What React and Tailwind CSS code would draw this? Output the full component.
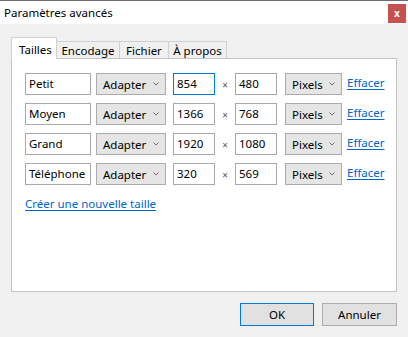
const ROWS = [
  { name: 'Petit', w: '854', h: '480', focused: true },
  { name: 'Moyen', w: '1366', h: '768' },
  { name: 'Grand', w: '1920', h: '1080' },
  { name: 'Téléphone', w: '320', h: '569' },
]

const TABS = [
  { label: 'Encodage', width: 'w-[63px]' },
  { label: 'Fichier', width: 'w-[49px]' },
  { label: 'À propos', width: 'w-[58px]' },
]

function Chevron() {
  return (
    <svg width="6" height="4" viewBox="0 0 6 4" className="shrink-0 -mt-[2px]">
      <path d="M0.5 0.5 L3 3 L5.5 0.5" fill="none" stroke="#707070" strokeWidth="1" />
    </svg>
  )
}

function Select({ label, width }) {
  return (
    <div
      className={`${width} h-[22px] flex items-center justify-between pl-[6px] pr-[6px] pt-[2px] bg-[#e5e5e5] border border-[#acacac]`}
    >
      <span>{label}</span>
      <Chevron />
    </div>
  )
}

function Field({ value, width, focused }) {
  return (
    <div
      className={`${width} h-[22px] flex items-start pl-[3px] pt-[1px] bg-white border ${
        focused ? 'border-[#0078d7]' : 'border-[#a8a8a8]'
      }`}
    >
      {value}
    </div>
  )
}

export default function App() {
  return (
    <div
      className="w-[408px] h-[337px] bg-[#f0f0f0] flex flex-col border-t border-[#6d6d6d] text-[11.5px] text-black overflow-hidden"
      style={{ fontFamily: '"Noto Sans", "Open Sans", sans-serif' }}
    >
      <div className="h-[23px] bg-white flex items-center justify-between pl-[4px] pr-[2px]">
        <span className="leading-none">Paramètres avancés</span>
        <div className="w-[18px] h-[19px] bg-[#c75050] flex items-center justify-center text-white text-[10px] font-bold leading-none mt-[1px]">
          x
        </div>
      </div>

      <div className="flex flex-col pl-[11px] pt-[13px]">
        <div className="flex items-end h-[22px]">
          <div className="w-[46px] h-[22px] pl-[7px] pt-[3px] bg-white border border-[#d0d0d0] border-b-0 relative z-10">
            Tailles
          </div>
          {TABS.map((tab) => (
            <div
              key={tab.label}
              className={`${tab.width} h-[18px] flex justify-center leading-[17px] bg-[#f0f0f0] border border-[#d0d0d0] border-l-0 border-b-0`}
            >
              {tab.label}
            </div>
          ))}
        </div>

        <div className="w-[386px] h-[234px] -mt-px bg-white border border-[#c4c4c4] pl-[13px] pt-[14px] flex flex-col">
          <div className="flex flex-col gap-[8px]">
            {ROWS.map((row) => (
              <div key={row.name} className="flex items-center">
                <Field value={row.name} width="w-[66px]" />
                <div className="ml-[5px]">
                  <Select label="Adapter" width="w-[70px]" />
                </div>
                <div className="ml-[7px]">
                  <Field value={row.w} width="w-[42px]" focused={row.focused} />
                </div>
                <span className="w-[20px] text-center text-[10px] text-[#555] pt-[3px]">×</span>
                <Field value={row.h} width="w-[42px]" />
                <div className="ml-[8px]">
                  <Select label="Pixels" width="w-[57px]" />
                </div>
                <a className="ml-[5px] text-[#0066cc] underline underline-offset-[2px] -mt-[3px]">Effacer</a>
              </div>
            ))}
          </div>
          <a className="mt-[10px] text-[#0066cc] underline underline-offset-[2px]">Créer une nouvelle taille</a>
        </div>

        <div className="flex justify-end gap-[8px] mt-[11px] w-[386px]">
          <div className="w-[74px] h-[23px] flex items-center justify-center bg-[#e1e1e1] border border-[#0078d7]">
            OK
          </div>
          <div className="w-[75px] h-[23px] flex items-center justify-center bg-[#e1e1e1] border border-[#adadad]">
            Annuler
          </div>
        </div>
      </div>
    </div>
  )
}
